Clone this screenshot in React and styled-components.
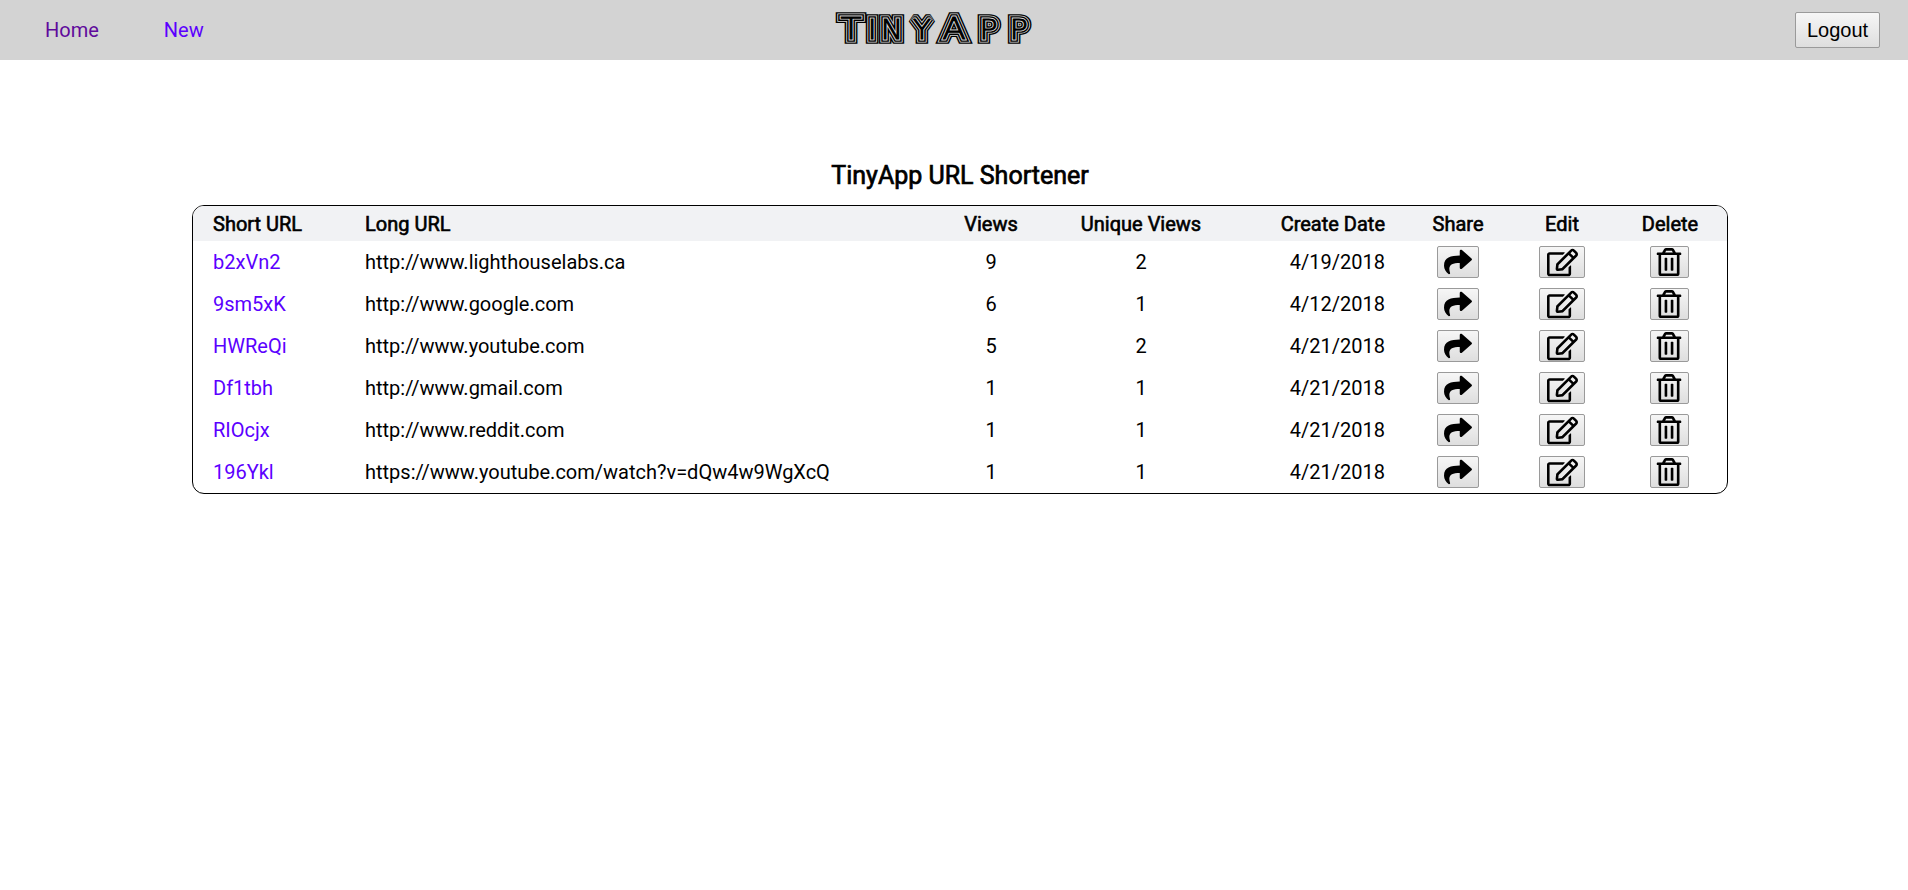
import React from 'react';
import styled, { createGlobalStyle } from 'styled-components';
import { FaShare, FaRegEdit, FaRegTrashAlt } from 'react-icons/fa';

const urls = [
  { short: 'b2xVn2', long: 'http://www.lighthouselabs.ca', views: 9, unique: 2, date: '4/19/2018' },
  { short: '9sm5xK', long: 'http://www.google.com', views: 6, unique: 1, date: '4/12/2018' },
  { short: 'HWReQi', long: 'http://www.youtube.com', views: 5, unique: 2, date: '4/21/2018' },
  { short: 'Df1tbh', long: 'http://www.gmail.com', views: 1, unique: 1, date: '4/21/2018' },
  { short: 'RIOcjx', long: 'http://www.reddit.com', views: 1, unique: 1, date: '4/21/2018' },
  { short: '196Ykl', long: 'https://www.youtube.com/watch?v=dQw4w9WgXcQ', views: 1, unique: 1, date: '4/21/2018' },
];

const columnWidths = [152, 576, 140, 160, 184, 106, 102, 114];

const App = () => {
  return (
    <>
      <GlobalStyle />
      <Nav>
        <NavLinks>
          <NavLink href="#home" $visited>Home</NavLink>
          <NavLink href="#new">New</NavLink>
        </NavLinks>
        <Logo />
        <NavRight>
          <Button>Logout</Button>
        </NavRight>
      </Nav>
      <Main>
        <Title>TinyApp URL Shortener</Title>
        <TableWrapper>
          <Table>
            <colgroup>
              {columnWidths.map((w, i) => <Col key={i} $width={w} />)}
            </colgroup>
            <thead>
              <HeadRow>
                <Th>Short URL</Th>
                <Th>Long URL</Th>
                <Th $align="center">Views</Th>
                <Th $align="center">Unique Views</Th>
                <Th $align="right">Create Date</Th>
                <Th $align="center">Share</Th>
                <Th $align="center">Edit</Th>
                <Th $align="center">Delete</Th>
              </HeadRow>
            </thead>
            <tbody>
              {urls.map((url) => (
                <tr key={url.short}>
                  <Td><ShortLink href={`#${url.short}`}>{url.short}</ShortLink></Td>
                  <Td>{url.long}</Td>
                  <Td $align="center">{url.views}</Td>
                  <Td $align="center">{url.unique}</Td>
                  <Td $align="right">{url.date}</Td>
                  <Td $align="center"><IconButton $w={42} $size={28}><FaShare /></IconButton></Td>
                  <Td $align="center"><IconButton $w={46} $size={31}><FaRegEdit /></IconButton></Td>
                  <DeleteCell $align="center"><IconButton $w={39} $size={28}><FaRegTrashAlt /></IconButton></DeleteCell>
                </tr>
              ))}
            </tbody>
          </Table>
        </TableWrapper>
      </Main>
    </>
  );
};

// the logo is live text, the stripes come from stacking wider and narrower strokes
const logoLayers = [
  { width: 9.6, color: '#000' },
  { width: 7, color: '#d3d3d3' },
  { width: 5.4, color: '#000' },
  { width: 2.8, color: '#d3d3d3' },
  { width: 1, color: '#000' },
];

const Logo = () => (
  <LogoSvg viewBox="0 0 196 40" width="196" height="40" role="img" aria-label="TinyApp">
    <defs>
      <LogoText id="logo-word" y="29">
        <tspan x="4" fontSize="30">T</tspan>
        <tspan x="27.6" fontSize="26">I</tspan>
        <tspan x="38.9" fontSize="26">N</tspan>
        <tspan x="66.7" fontSize="26">Y</tspan>
        <tspan x="92.5" fontSize="30">A</tspan>
        <tspan x="124.8" fontSize="26">P</tspan>
        <tspan x="151" fontSize="26">P</tspan>
      </LogoText>
    </defs>
    <g transform="scale(1.15 1)">
      {logoLayers.map((layer, i) => (
        <use key={i} href="#logo-word" stroke={layer.color} strokeWidth={layer.width} fill={layer.color} />
      ))}
    </g>
  </LogoSvg>
);

const GlobalStyle = createGlobalStyle`
  body {
    margin: 0;
    background: #fff;
    color: #000;
    font-family: Roboto, "Liberation Sans", sans-serif;
    font-size: 20px;
  }
`;

const Nav = styled.nav`
  display: grid;
  grid-template-columns: 836px 196px 1fr;
  align-items: center;
  height: 60px;
  background-color: #d3d3d3;
`;

const NavLinks = styled.div`
  display: flex;
  gap: 65px;
  padding-left: 45px;
`;

const NavLink = styled.a`
  color: ${(p) => (p.$visited ? '#600a9c' : '#5b00ff')};
  font-size: 20px;
  text-decoration: none;
`;

const LogoSvg = styled.svg`
  display: block;
  overflow: visible;
`;

const LogoText = styled.text`
  font-family: "DejaVu Sans", sans-serif;
  font-weight: 200;
  stroke-linejoin: miter;
  stroke-miterlimit: 2;
`;

const NavRight = styled.div`
  display: flex;
  justify-content: flex-end;
  padding-right: 28px;
`;

const Button = styled.button`
  display: inline-flex;
  align-items: center;
  justify-content: center;
  padding: 0;
  width: 85px;
  height: 36px;
  border: 1px solid #9a9a9a;
  border-radius: 2px;
  background: linear-gradient(#f6f6f6, #dedede);
  color: #000;
  font-family: "Liberation Sans", sans-serif;
  font-size: 20px;
`;

const IconButton = styled.button`
  display: inline-flex;
  align-items: center;
  justify-content: center;
  vertical-align: middle;
  padding: 0;
  width: ${(p) => p.$w}px;
  height: 32px;
  border: 1px solid #9a9a9a;
  border-radius: 2px;
  background: linear-gradient(#f6f6f6, #dedede);
  color: #000;
  font-size: ${(p) => p.$size}px;

  svg {
    display: block;
  }
`;

const Main = styled.main`
  width: 1536px;
  margin-left: 192px;
  padding-top: 100px;
`;

const Title = styled.h1`
  margin: 0 0 14px;
  font-size: 25px;
  font-weight: 400;
  -webkit-text-stroke: 0.7px #000;
  line-height: 31px;
  text-align: center;
`;

const TableWrapper = styled.div`
  border: 1px solid #000;
  border-radius: 12px;
  overflow: hidden;
`;

const Table = styled.table`
  width: 100%;
  table-layout: fixed;
  border-collapse: collapse;
`;

const Col = styled.col`
  width: ${(p) => p.$width}px;
`;

const HeadRow = styled.tr`
  background-color: #f1f2f4;
`;

const Th = styled.th`
  height: 35px;
  padding: 0 ${(p) => (p.$align === 'right' ? '20px' : '0')} 0 ${(p) => (p.$align ? '0' : '20px')};
  font-size: 20px;
  font-weight: 400;
  -webkit-text-stroke: 0.6px #000;
  text-align: ${(p) => p.$align || 'left'};
`;

const Td = styled.td`
  height: 42px;
  padding: 0 ${(p) => (p.$align === 'right' ? '20px' : '0')} 0 ${(p) => (p.$align ? '0' : '20px')};
  font-size: 20px;
  text-align: ${(p) => p.$align || 'left'};
`;

const DeleteCell = styled(Td)`
  padding-right: 2px;
`;

const ShortLink = styled.a`
  color: #5b00ff;
  text-decoration: none;
`;

export default App;
